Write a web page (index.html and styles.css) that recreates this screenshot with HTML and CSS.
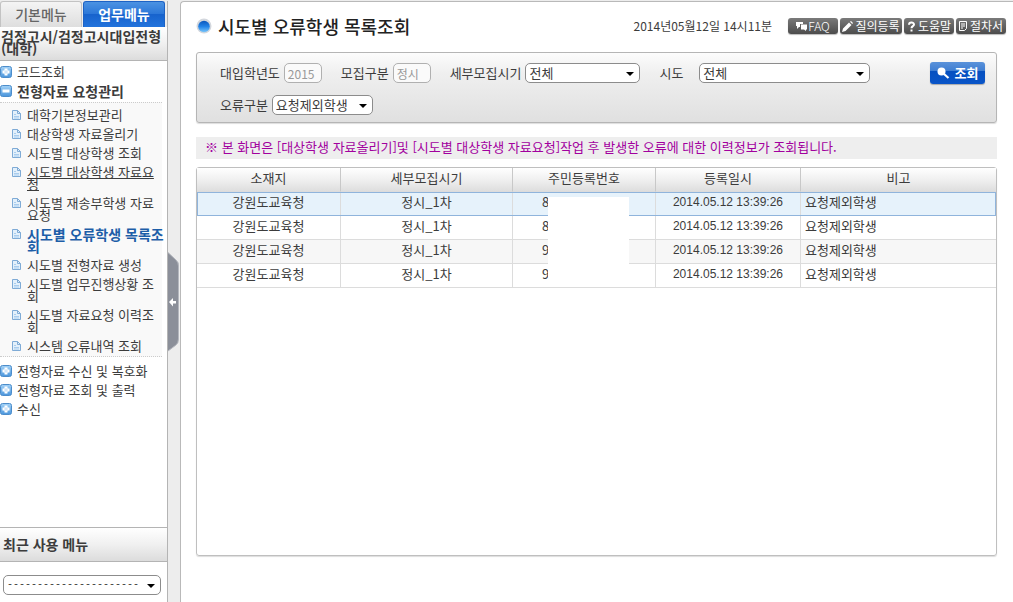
FILE: index.html
```html
<!DOCTYPE html>
<html lang="ko">
<head>
<meta charset="utf-8">
<title>시도별 오류학생 목록조회</title>
<link rel="stylesheet" href="styles.css">
</head>
<body>
<svg class="defs" width="0" height="0" aria-hidden="true">
  <defs>
    <linearGradient id="blue" x1="0" y1="0" x2="0" y2="1"><stop offset="0" stop-color="#a5d3f7"/><stop offset="1" stop-color="#4a95dc"/></linearGradient>
    <linearGradient id="ball" x1="0" y1="0" x2="0" y2="1"><stop offset="0" stop-color="#0b57bd"/><stop offset=".5" stop-color="#2383e6"/><stop offset="1" stop-color="#7cc8fb"/></linearGradient>
    <symbol id="plus" viewBox="0 0 12 12"><rect x=".5" y=".5" width="11" height="11" rx="2" fill="url(#blue)" stroke="#4c8dcb"/><path d="M4.5 2.5h3v2h2v3h-2v2h-3v-2h-2v-3h2z" fill="#fff"/><path d="M6 4v4M4 6h4" stroke="#a9cdf0" stroke-width=".6"/></symbol>
    <symbol id="minus" viewBox="0 0 12 12"><rect x=".5" y=".5" width="11" height="11" rx="2" fill="url(#blue)" stroke="#4c8dcb"/><path d="M2.5 4.5h7v3h-7z" fill="#fff"/></symbol>
    <symbol id="page" viewBox="0 0 9 10"><path d="M.5.5h5l3 3v6h-8z" fill="#e3f0fb" stroke="#7fabd6"/><path d="M5.5.5v3h3" fill="none" stroke="#7fabd6"/><path d="M2 4.500h2M2 6.500h5M2 8h5" stroke="#a9cdee"/></symbol>
  </defs>
</svg>
<div class="app">
  <aside class="sidebar">
    <div class="tabs">
      <button type="button" class="tab">기본메뉴</button>
      <button type="button" class="tab tab-on">업무메뉴</button>
    </div>
    <h2 class="group-title">검정고시/검정고시대입전형(대학)</h2>
    <nav class="menu">
      <a class="top" href="#"><svg class="box"><use href="#plus"/></svg>코드조회</a>
      <a class="top top-open" href="#"><svg class="box"><use href="#minus"/></svg>전형자료 요청관리</a>
      <div class="sub">
        <a class="item" href="#"><svg class="doc"><use href="#page"/></svg><span class="name">대학기본정보관리</span></a>
        <a class="item" href="#"><svg class="doc"><use href="#page"/></svg><span class="name">대상학생 자료올리기</span></a>
        <a class="item" href="#"><svg class="doc"><use href="#page"/></svg><span class="name">시도별 대상학생 조회</span></a>
        <a class="item item-hover" href="#"><svg class="doc"><use href="#page"/></svg><span class="name">시도별 대상학생 자료요청</span></a>
        <a class="item" href="#"><svg class="doc"><use href="#page"/></svg><span class="name">시도별 재송부학생 자료요청</span></a>
        <a class="item item-on" href="#"><svg class="doc"><use href="#page"/></svg><span class="name">시도별 오류학생 목록조회</span></a>
        <a class="item" href="#"><svg class="doc"><use href="#page"/></svg><span class="name">시도별 전형자료 생성</span></a>
        <a class="item" href="#"><svg class="doc"><use href="#page"/></svg><span class="name">시도별 업무진행상황 조회</span></a>
        <a class="item" href="#"><svg class="doc"><use href="#page"/></svg><span class="name">시도별 자료요청 이력조회</span></a>
        <a class="item" href="#"><svg class="doc"><use href="#page"/></svg><span class="name">시스템 오류내역 조회</span></a>
      </div>
      <a class="top" href="#"><svg class="box"><use href="#plus"/></svg>전형자료 수신 및 복호화</a>
      <a class="top" href="#"><svg class="box"><use href="#plus"/></svg>전형자료 조회 및 출력</a>
      <a class="top" href="#"><svg class="box"><use href="#plus"/></svg>수신</a>
    </nav>
    <h2 class="recent-title" id="recent">최근 사용 메뉴</h2>
    <div class="recent">
      <span class="pick"><select class="field dashes" aria-labelledby="recent"><option>----------------------</option></select></span>
    </div>
  </aside>

  <div class="gutter">
    <button type="button" class="handle" aria-label="메뉴 접기">
      <svg width="11" height="100" viewBox="0 0 11 100"><path d="M0 .5L8 8q2.500 2 2.500 6v73q0 4-2.500 6L0 99z" fill="#8b8f99"/><path d="M0 .5L8 8q2.500 2 2.500 6v73q0 4-2.500 6L0 99" fill="none" stroke="#b4b7be"/><path d="M1 50l4-4v3h3v2.500H5v3z" fill="#fff"/></svg>
    </button>
  </div>

  <main class="main">
    <header class="head">
      <svg class="bullet" viewBox="0 0 16 16"><circle cx="8" cy="8" r="7.500" fill="#d3d7dd"/><circle cx="8" cy="8.500" r="5.800" fill="url(#ball)"/></svg>
      <h1 class="title">시도별 오류학생 목록조회</h1>
      <span class="clock">2014년05월12일 14시11분</span>
      <div class="tools">
        <button type="button" class="tool tool-faq"><svg width="12" height="10" viewBox="0 0 12 10"><path d="M0 1h7v2H4v3H3L1 8V5H0z" fill="#fff"/><path d="M5 3.500h6v5h-1v1.500L8 8.500H5z" fill="#fff"/></svg>FAQ</button>
        <button type="button" class="tool tool-wide"><svg width="11" height="11" viewBox="0 0 11 11"><path d="M0 11l1-3.500 6-6L9.500 4l-6 6zM8 .8L9 0l2 2-.8 1z" fill="#fff"/></svg>질의등록</button>
        <button type="button" class="tool"><svg width="9" height="11" viewBox="0 0 9 11"><path d="M2 3.800C2 .8 7 .8 7 3.500 7 5.200 4.500 5 4.500 7.200M4.500 8.500v2" fill="none" stroke="#fff" stroke-width="2"/></svg>도움말</button>
        <button type="button" class="tool"><svg width="9" height="10" viewBox="0 0 9 10"><path d="M.5.500h7v7l-2 2h-5zM2 3h4M2 5h4M2 7h2" fill="none" stroke="#fff"/></svg>절차서</button>
      </div>
    </header>

    <form class="search">
      <div class="line">
        <label for="year">대입학년도</label><input class="field short" id="year" value="2015" disabled>
        <label for="kind">모집구분</label><input class="field short" id="kind" value="정시" disabled>
        <label for="term">세부모집시기</label><span class="pick pick-term"><select class="field" id="term"><option>전체</option></select></span>
        <label class="wide" for="area">시도</label><span class="pick pick-area"><select class="field" id="area"><option>전체</option></select></span>
        <button type="button" class="find"><svg width="13" height="12" viewBox="0 0 13 12"><circle cx="4.500" cy="4.500" r="4" fill="#fff"/><path d="M7 7l4.500 4" stroke="#fff" stroke-width="2.200"/></svg>조회</button>
      </div>
      <div class="line">
        <label for="error">오류구분</label><span class="pick pick-error"><select class="field" id="error"><option>요청제외학생</option></select></span>
      </div>
    </form>

    <p class="notice">※ 본 화면은 [대상학생 자료올리기]및 [시도별 대상학생 자료요청]작업 후 발생한 오류에 대한 이력정보가 조회됩니다.</p>

    <section class="grid">
      <table class="table">
        <colgroup><col class="c-place"><col class="c-term"><col class="c-id"><col class="c-date"><col></colgroup>
        <thead><tr><th>소재지</th><th>세부모집시기</th><th>주민등록번호</th><th>등록일시</th><th>비고</th></tr></thead>
        <tbody>
          <tr class="picked"><td>강원도교육청</td><td>정시_1차</td><td class="id">8</td><td class="date">2014.05.12 13:39:26</td><td class="memo">요청제외학생</td></tr>
          <tr><td>강원도교육청</td><td>정시_1차</td><td class="id">8</td><td class="date">2014.05.12 13:39:26</td><td class="memo">요청제외학생</td></tr>
          <tr class="even"><td>강원도교육청</td><td>정시_1차</td><td class="id">9</td><td class="date">2014.05.12 13:39:26</td><td class="memo">요청제외학생</td></tr>
          <tr><td>강원도교육청</td><td>정시_1차</td><td class="id">9</td><td class="date">2014.05.12 13:39:26</td><td class="memo">요청제외학생</td></tr>
        </tbody>
      </table>
      <div class="mask"></div>
    </section>
  </main>
</div>
</body>
</html>
```

FILE: styles.css
```css
* { box-sizing: border-box; }
body {
  margin: 0;
  background: #ededed;
  color: #3c3c3c;
  font: 13px/20px "Noto Sans CJK KR", sans-serif;
}
button, input, select { font: inherit; color: inherit; margin: 0; }
a { color: inherit; text-decoration: none; }
h1, h2, p { margin: 0; }
.defs { position: absolute; }
.app { display: flex; min-height: 100vh; padding-top: 1px; }

/* left menu */
.sidebar {
  display: flex;
  flex-direction: column;
  flex: 0 0 168px;
  background: #fff;
  border-right: 1px solid #b4b4b4;
  overflow: hidden;
}
.tabs { display: flex; gap: 1px; background: #ededed; }
.tab {
  width: 82px;
  height: 26px;
  padding: 0 0 2px;
  border: 1px solid #c3c3c3;
  border-bottom: 0;
  border-radius: 3px 3px 0 0;
  background: linear-gradient(#f4f4f4, #dedede);
  color: #666;
  font-size: 14px;
  font-weight: 500;
}
.tab-on {
  border-color: #1d62c4;
  background: linear-gradient(#4b92e2, #2a76d8 50%, #1763cd 50%, #2273dc);
  color: #fff;
  font-weight: 700;
}
.group-title {
  padding: 3px 1px 6px;
  border-bottom: 1px solid #b4b4b4;
  background: linear-gradient(#fff, #f0f0f0 50%, #dcdcdc);
  font-size: 14px;
  line-height: 12px;
  word-break: break-all;
}
.menu { flex: 1; padding-top: 1px; }
.top { display: flex; align-items: center; gap: 5px; height: 19px; }
.top-open { font-size: 14px; font-weight: 700; }
.box { width: 12px; height: 12px; }
.sub {
  display: grid;
  gap: 7px;
  margin: 2px 5px 4px 0;
  padding: 6px 0 4px 12px;
  border: dotted #ccc;
  border-width: 1px 0;
  background: #f9f9f9;
}
.item { display: flex; gap: 6px; line-height: 12px; }
.doc { flex: none; width: 9px; height: 10px; margin-top: 1px; }
.name { flex: 0 0 136px; word-break: break-all; }
.item-hover { text-decoration: underline; }
.item-on { color: #1d5ea8; font-size: 14px; font-weight: 700; }
.item-on .name { flex-basis: 142px; }
.recent-title {
  padding: 6px 3px 7px;
  border: solid #b4b4b4;
  border-width: 1px 0;
  background: linear-gradient(#fff, #f0f0f0 50%, #dcdcdc);
  font-size: 14px;
}
.recent { padding: 13px 6px 7px 3px; }

/* form fields */
.pick { position: relative; display: block; }
.pick::after {
  content: "";
  position: absolute;
  top: 9px;
  right: 6px;
  border: solid transparent;
  border-width: 4px 4px 0;
  border-top-color: #000;
  pointer-events: none;
}
.field {
  display: block;
  width: 100%;
  height: 20px;
  padding: 0 3px;
  border: 1px solid #8c8c8c;
  border-radius: 5px;
  background: #fff;
  line-height: 18px;
  appearance: none;
}
.dashes { font-family: "Liberation Mono", monospace; font-size: 10px; }
.short { width: 38px; border-color: #b0b0b0; color: #999; background: #fafafa; font-size: 12px; }

/* collapse strip */
.gutter { display: flex; align-items: center; flex: 0 0 12px; }
.handle { display: block; padding: 0; border: 0; background: none; line-height: 0; }

/* content */
.main {
  display: flex;
  flex-direction: column;
  flex: 1;
  min-width: 0;
  padding: 0 16px 46px 15px;
  border: solid #b9b9b9;
  border-width: 1px 0 0 1px;
  border-radius: 4px 0 0 0;
  background: #fff;
}
.head { display: flex; align-items: center; height: 50px; margin-right: -9px; padding-bottom: 2px; }
.bullet { width: 16px; height: 16px; margin-right: 6px; }
.title { color: #222; font-size: 18px; font-weight: 500; }
.clock { margin-left: auto; font-size: 12px; }
.tools { display: flex; gap: 2px; margin-left: 16px; }
.tool {
  display: flex;
  align-items: center;
  justify-content: center;
  gap: 2px;
  width: 50px;
  height: 16px;
  padding: 0;
  border: 0;
  border-radius: 3px;
  background: linear-gradient(#7a7a7a, #4c4c4c);
  box-shadow: 0 1px 1px #bbb;
  color: #fff;
  font-size: 12px;
  line-height: 16px;
}
.tool-wide { width: 62px; }
.tool-faq { gap: 0; font-weight: 300; }

.search {
  display: grid;
  gap: 12px;
  padding: 10px 11px 7px 23px;
  border: 1px solid #b5b5b5;
  border-radius: 3px;
  background: linear-gradient(#fcfcfc, #efefef 30%, #e0e0e0);
  box-shadow: 0 1px 1px #ddd;
}
.line { display: flex; align-items: center; height: 20px; }
.line label { margin-right: 4px; }
.line .short { margin-right: 19px; }
.line .wide { margin-right: 16px; }
.pick-term { width: 115px; margin-right: 19px; }
.pick-area { width: 171px; }
.pick-error { width: 101px; }
.find {
  display: flex;
  align-items: center;
  justify-content: center;
  gap: 5px;
  width: 55px;
  height: 22px;
  margin-left: auto;
  padding: 0;
  border: 0;
  border-radius: 3px;
  background: linear-gradient(#5a92da, #3f7ed2 40%, #0650c0 40%, #0a55c8);
  box-shadow: 0 1px 1px #aaa;
  color: #fff;
  font-weight: 700;
}
.notice {
  margin: 14px 0 8px;
  padding: 0 9px 2px;
  background: #eee;
  color: #a2009e;
}

/* result list */
.grid {
  position: relative;
  flex: 1;
  border: 1px solid #bfbfbf;
  border-radius: 3px;
  box-shadow: 0 1px 1px #ddd;
}
.table { width: 100%; border-spacing: 0; table-layout: fixed; }
.c-place { width: 144px; }
.c-term { width: 172px; }
.c-id { width: 143px; }
.c-date { width: 145px; }
.table th, .table td {
  height: 24px;
  padding: 0 4px 3px;
  border: solid #dcdcdc;
  border-width: 0 1px 1px 0;
  font-weight: 400;
  line-height: 20px;
  text-align: center;
}
.table th { background: linear-gradient(#fff, #f0f0f0 50%, #dedede); border-right-color: #c8c8c8; }
.table th:last-child, .table td:last-child { border-right: 0; }
.table .id { padding-left: 29px; text-align: left; }
.table .date { font-family: "Liberation Sans", sans-serif; font-size: 12px; }
.table .memo { text-align: left; }
.even td { background: #f7f7f7; }
.picked td { background: #e6f2fb; }
.picked { outline: 1px solid #8fb4dc; outline-offset: -1px; }
.mask {
  position: absolute;
  top: 29px;
  left: 351px;
  width: 81px;
  height: 88px;
  background: #fff;
}
```
